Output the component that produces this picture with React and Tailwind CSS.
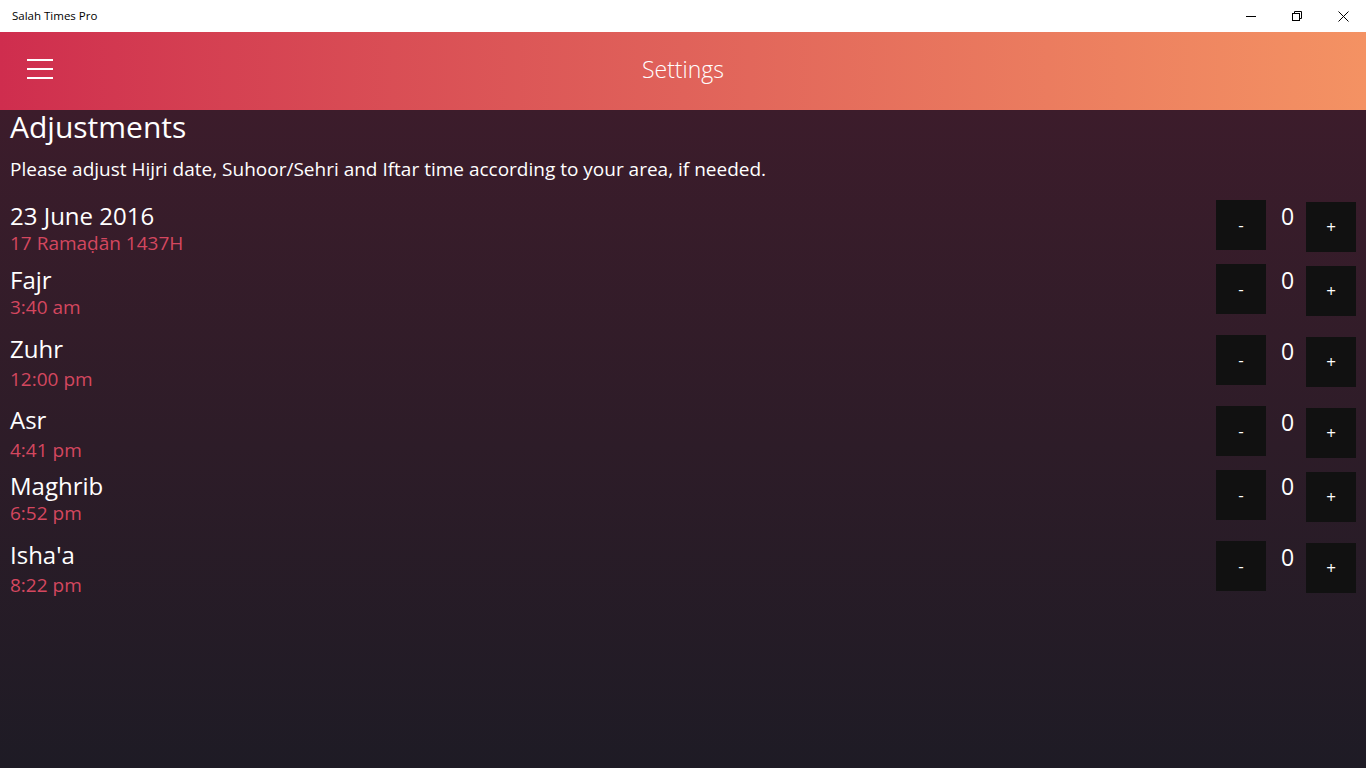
import React from "react";

const rows = [
  { name: "23 June 2016", sub: "17 Ramaḍān 1437H", h: "h-[64px]", subMt: "mt-0", nameMt: "mt-[2px]" },
  { name: "Fajr", sub: "3:40 am", h: "h-[71px]", subMt: "mt-0", nameMt: "mt-[2px]" },
  { name: "Zuhr", sub: "12:00 pm", h: "h-[71px]", subMt: "mt-[3px]", nameMt: "mt-0" },
  { name: "Asr", sub: "4:41 pm", h: "h-[64px]", subMt: "mt-[3px]", nameMt: "mt-0" },
  { name: "Maghrib", sub: "6:52 pm", h: "h-[71px]", subMt: "mt-0", nameMt: "mt-[2px]" },
  { name: "Isha'a", sub: "8:22 pm", h: "h-[64px]", subMt: "mt-[3px]", nameMt: "mt-0" },
];

function Row({ r }) {
  return (
    <div className={`flex justify-between ${r.h}`}>
      <div className={`flex flex-col ${r.nameMt}`}>
        <div className="text-[24px] leading-[28px] text-white">{r.name}</div>
        <div className={`text-[19px] leading-[26px] text-[#d4475f] ${r.subMt}`}>{r.sub}</div>
      </div>
      <div className="flex items-start">
        <button className="w-[50px] h-[50px] bg-[#111111] text-white text-[17px] flex items-center justify-center">-</button>
        <div className="w-[40px] pl-[3px] text-center text-white text-[23px] leading-[32px]">0</div>
        <button className="w-[50px] h-[50px] mt-[2px] bg-[#111111] text-white text-[17px] flex items-center justify-center">+</button>
      </div>
    </div>
  );
}

export default function App() {
  return (
    <div className="w-[1366px] h-[768px] flex flex-col overflow-hidden" style={{ fontFamily: '"Open Sans", "Noto Sans", sans-serif' }}>
      <div className="h-[32px] bg-white flex items-center justify-between shrink-0">
        <div className="pl-[12px] text-[11.5px] text-black">Salah Times Pro</div>
        <div className="flex h-full">
          <div className="w-[46px] h-full flex items-center justify-center">
            <svg width="10" height="10" viewBox="0 0 10 10"><line x1="0" y1="5.5" x2="10" y2="5.5" stroke="#000" strokeWidth="1" /></svg>
          </div>
          <div className="w-[46px] h-full flex items-center justify-center">
            <svg width="10" height="10" viewBox="0 0 10 10" fill="none" stroke="#000" strokeWidth="1">
              <rect x="0.5" y="2.5" width="7" height="7" />
              <path d="M2.5 2.5V0.5H9.5V7.5H7.5" />
            </svg>
          </div>
          <div className="w-[46px] h-full flex items-center justify-center">
            <svg width="11" height="11" viewBox="0 0 11 11" stroke="#000" strokeWidth="1"><line x1="0.5" y1="0.5" x2="10.5" y2="10.5" /><line x1="10.5" y1="0.5" x2="0.5" y2="10.5" /></svg>
          </div>
        </div>
      </div>
      <div className="h-[78px] shrink-0 bg-gradient-to-r from-[#cf2d4e] via-[#e0625a] to-[#f49263] relative flex items-center justify-center">
        <div className="absolute left-[27px] top-[27px] flex flex-col gap-[7px]">
          <div className="w-[26px] h-[2px] bg-white" />
          <div className="w-[26px] h-[2px] bg-white" />
          <div className="w-[26px] h-[2px] bg-white" />
        </div>
        <div className="text-white text-[23px] font-light mb-[4px]">Settings</div>
      </div>
      <div className="flex-1 bg-gradient-to-b from-[#3c1c2b] to-[#1e1b25] px-[10px]">
        <div className="text-[30px] leading-[38px] text-white -mt-[2px]">Adjustments</div>
        <div className="text-[19px] leading-[26px] text-white mt-[10px]">Please adjust Hijri date, Suhoor/Sehri and Iftar time according to your area, if needed.</div>
        <div className="mt-[18px] flex flex-col">
          {rows.map((r) => (
            <Row key={r.name} r={r} />
          ))}
        </div>
      </div>
    </div>
  );
}
